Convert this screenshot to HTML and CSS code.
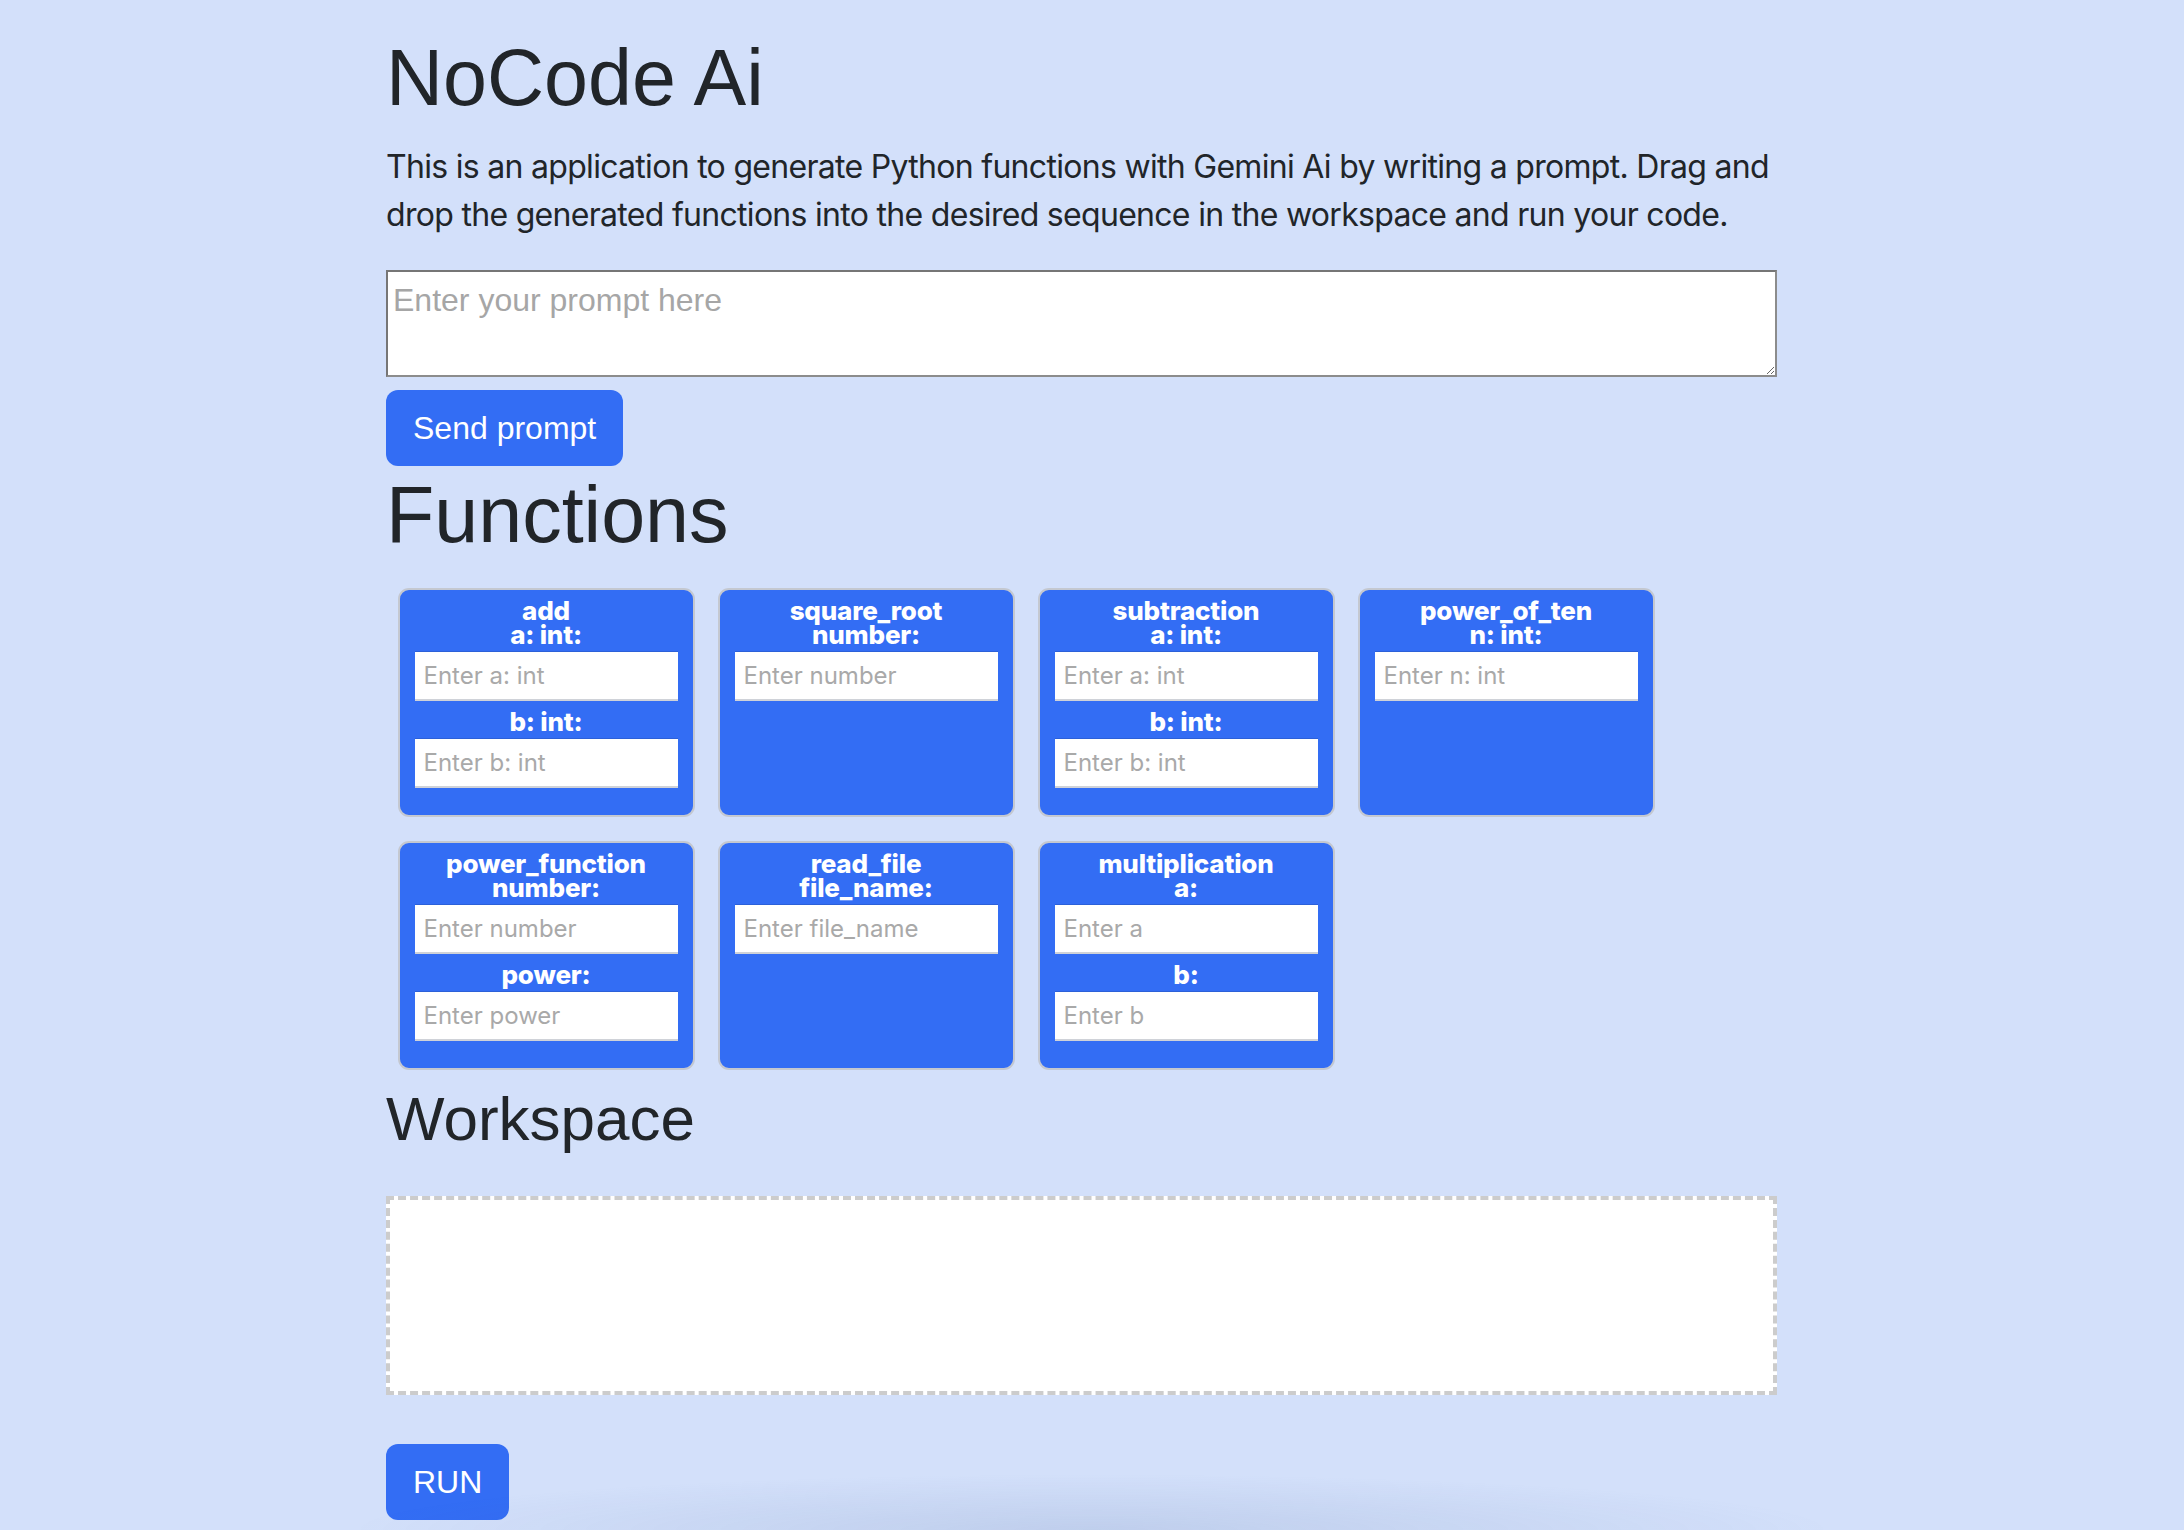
FILE: index.html
```html
<!DOCTYPE html>
<html lang="en">
<head>
<meta charset="utf-8">
<title>NoCode Ai</title>
<link rel="stylesheet" href="styles.css">
</head>
<body>
<main class="app">
  <h1 class="title">NoCode Ai</h1>
  <p class="intro">This is an application to generate Python functions with Gemini Ai by writing a prompt. Drag and drop the generated functions into the desired sequence in the workspace and run your code.</p>
  <textarea class="prompt" placeholder="Enter your prompt here"></textarea>
  <button class="btn btn-send">Send prompt</button>

  <h1 class="title section-title">Functions</h1>
  <div class="functions">
    <div class="fn-card">
      <div class="fn-name">add</div>
      <label class="fn-param">a: int:</label>
      <input class="fn-input" placeholder="Enter a: int">
      <label class="fn-param">b: int:</label>
      <input class="fn-input" placeholder="Enter b: int">
    </div>
    <div class="fn-card">
      <div class="fn-name">square_root</div>
      <label class="fn-param">number:</label>
      <input class="fn-input" placeholder="Enter number">
    </div>
    <div class="fn-card">
      <div class="fn-name">subtraction</div>
      <label class="fn-param">a: int:</label>
      <input class="fn-input" placeholder="Enter a: int">
      <label class="fn-param">b: int:</label>
      <input class="fn-input" placeholder="Enter b: int">
    </div>
    <div class="fn-card">
      <div class="fn-name">power_of_ten</div>
      <label class="fn-param">n: int:</label>
      <input class="fn-input" placeholder="Enter n: int">
    </div>
    <div class="fn-card">
      <div class="fn-name">power_function</div>
      <label class="fn-param">number:</label>
      <input class="fn-input" placeholder="Enter number">
      <label class="fn-param">power:</label>
      <input class="fn-input" placeholder="Enter power">
    </div>
    <div class="fn-card">
      <div class="fn-name">read_file</div>
      <label class="fn-param">file_name:</label>
      <input class="fn-input" placeholder="Enter file_name">
    </div>
    <div class="fn-card">
      <div class="fn-name">multiplication</div>
      <label class="fn-param">a:</label>
      <input class="fn-input" placeholder="Enter a">
      <label class="fn-param">b:</label>
      <input class="fn-input" placeholder="Enter b">
    </div>
  </div>

  <h2 class="workspace-title">Workspace</h2>
  <div class="workspace"></div>
  <button class="btn btn-run">RUN</button>
</main>
<div class="bottom-shade"></div>
</body>
</html>
```

FILE: styles.css
```css
html, body {
  margin: 0;
  padding: 0;
}

body {
  background: #d3e0fa;
  color: #212529;
  font-family: "Liberation Sans", Arial, sans-serif;
}

.app {
  width: 1391px;
  margin-left: 386px;
  padding-top: 31px;
}

.title {
  font-family: "Liberation Sans", Arial, sans-serif;
  font-weight: 400;
  font-size: 79px;
  line-height: 1.2;
  margin: 0 0 17px;
  color: #212529;
}

.intro {
  font-family: Inter, "Noto Sans", sans-serif;
  font-size: 32px;
  line-height: 48px;
  letter-spacing: -0.7px;
  margin: 0 0 31px;
  color: #212529;
}

.prompt {
  display: block;
  box-sizing: border-box;
  width: 100%;
  height: 107px;
  margin: 0 0 13px;
  padding: 4px 5px;
  border: 2px solid #8c8c8c;
  border-top-color: #767676;
  border-left-color: #767676;
  background: #fff;
  font-family: "Liberation Sans", Arial, sans-serif;
  font-size: 32px;
  line-height: 48px;
  color: #212529;
}

.prompt::placeholder {
  color: #a6a6a6;
}

.btn {
  display: block;
  width: fit-content;
  box-sizing: border-box;
  padding: 12px 25px;
  border: 2px solid transparent;
  border-radius: 12px;
  background: #336df4;
  color: #fff;
  font-family: "Liberation Sans", Arial, sans-serif;
  font-size: 32px;
  line-height: 48px;
  cursor: pointer;
}

.section-title {
  margin-top: 2px;
  margin-bottom: 13px;
}

.functions {
  display: flex;
  flex-wrap: wrap;
}

.fn-card {
  box-sizing: border-box;
  width: 297px;
  min-height: 229px;
  margin: 12px 11.5px;
  padding: 9px 15px 16px;
  border: 2px solid #c4c8d0;
  border-radius: 11px;
  background: #336df4;
  color: #fff;
  text-align: center;
  font-family: Inter, "Noto Sans", sans-serif;
  font-weight: 800;
  font-size: 26px;
  line-height: 24px;
  letter-spacing: -0.2px;
}

.fn-name,
.fn-param {
  display: block;
}

.fn-input {
  display: block;
  box-sizing: border-box;
  width: 100%;
  height: 50px;
  margin: 4px 0 9px;
  padding: 0 9px;
  border: 0;
  border-top: 1px solid #2c60d8;
  border-bottom: 2px solid #cfd2d8;
  background: #fff;
  font-family: Inter, "Noto Sans", sans-serif;
  font-weight: 400;
  font-size: 24px;
  letter-spacing: 0;
  color: #212529;
}

.fn-input::placeholder {
  color: #a9a9a9;
}

.workspace-title {
  font-family: "Liberation Sans", Arial, sans-serif;
  font-weight: 400;
  font-size: 62px;
  line-height: 1.2;
  margin: 0;
  color: #212529;
}

.workspace {
  box-sizing: border-box;
  height: 199px;
  margin-top: 40px;
  border: 4px dashed #cccccc;
  background: #fff;
}

.btn-run {
  margin-top: 49px;
}

.bottom-shade {
  position: fixed;
  left: 0;
  right: 0;
  bottom: 0;
  height: 56px;
  pointer-events: none;
  background: radial-gradient(ellipse 34% 100% at 50% 100%, rgba(60, 90, 150, 0.13), rgba(60, 90, 150, 0));
}
```
